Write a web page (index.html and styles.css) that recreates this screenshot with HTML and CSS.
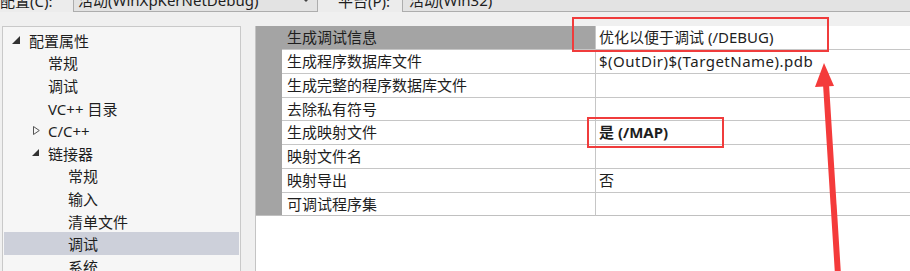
FILE: index.html
```html
<!DOCTYPE html>
<html lang="zh-CN">
<head>
    <meta charset="UTF-8">
    <meta name="viewport" content="width=device-width, initial-scale=1.0">
    <title>属性页 - 链接器 - 调试</title>
    <link rel="stylesheet" href="styles.css">
</head>
<body>
    <div class="topbar">
        <span class="bar-label">配置(C):</span>
        <div class="combo combo-config">
            <span>活动(WinXpKerNetDebug)</span>
            <span class="combo-caret"></span>
        </div>
        <span class="bar-label bar-label-platform">平台(P):</span>
        <div class="combo combo-platform">
            <span>活动(Win32)</span>
        </div>
    </div>

    <div class="main">
        <ul class="tree">
            <li class="node level-0"><span class="twisty twisty-open"></span>配置属性</li>
            <li class="node level-1"><span class="twisty"></span>常规</li>
            <li class="node level-1"><span class="twisty"></span>调试</li>
            <li class="node level-1"><span class="twisty"></span>VC++ 目录</li>
            <li class="node level-1">
                <span class="twisty">
                    <svg width="7" height="9" viewBox="0 0 7 9"><polygon points="0.5,0.5 6.3,4.5 0.5,8.5" fill="none" stroke="#555" stroke-width="1"/></svg>
                </span>C/C++
            </li>
            <li class="node level-1"><span class="twisty twisty-open"></span>链接器</li>
            <li class="node level-2"><span class="twisty"></span>常规</li>
            <li class="node level-2"><span class="twisty"></span>输入</li>
            <li class="node level-2"><span class="twisty"></span>清单文件</li>
            <li class="node level-2 node-selected"><span class="twisty"></span>调试</li>
            <li class="node level-2"><span class="twisty"></span>系统</li>
        </ul>

        <div class="grid">
            <div class="prop prop-selected">
                <span class="gutter"></span>
                <span class="prop-name">生成调试信息</span>
                <span class="prop-value">优化以便于调试 (/DEBUG)</span>
            </div>
            <div class="prop">
                <span class="gutter"></span>
                <span class="prop-name">生成程序数据库文件</span>
                <span class="prop-value prop-value-path">$(OutDir)$(TargetName).pdb</span>
            </div>
            <div class="prop">
                <span class="gutter"></span>
                <span class="prop-name">生成完整的程序数据库文件</span>
                <span class="prop-value"></span>
            </div>
            <div class="prop">
                <span class="gutter"></span>
                <span class="prop-name">去除私有符号</span>
                <span class="prop-value"></span>
            </div>
            <div class="prop">
                <span class="gutter"></span>
                <span class="prop-name">生成映射文件</span>
                <span class="prop-value prop-value-set">是 (/MAP)</span>
            </div>
            <div class="prop">
                <span class="gutter"></span>
                <span class="prop-name">映射文件名</span>
                <span class="prop-value"></span>
            </div>
            <div class="prop">
                <span class="gutter"></span>
                <span class="prop-name">映射导出</span>
                <span class="prop-value">否</span>
            </div>
            <div class="prop">
                <span class="gutter"></span>
                <span class="prop-name">可调试程序集</span>
                <span class="prop-value"></span>
            </div>
        </div>
    </div>

    <!-- 标注 -->
    <div class="callout callout-debug"></div>
    <div class="callout callout-map"></div>
    <svg class="arrow" width="910" height="271" viewBox="0 0 910 271">
        <polygon points="824,63 815,87 834,86" fill="#f43b3b"/>
        <polygon points="823,84 829,84 841,275 835,275" fill="#f43b3b"/>
    </svg>
</body>
</html>
```

FILE: styles.css
```css
body {
    margin: 0;
    background-color: #f0f0f0;
    color: #1e1e1e;
    font-family: 'Noto Sans', 'Noto Sans CJK SC', sans-serif;
    font-size: 15px;
    width: 910px;
    height: 271px;
    overflow: hidden;
    position: relative;
}
.topbar {
    height: 12px;
    display: flex;
    align-items: flex-end;
    overflow: hidden;
    background: #ececec;
}
.bar-label {
    width: 73px;
    line-height: 22px;
    white-space: nowrap;
    flex-shrink: 0;
}
.bar-label-platform {
    width: 64px;
    margin-left: 20px;
}
.combo {
    box-sizing: border-box;
    height: 24px;
    line-height: 21px;
    background: #e3e3e3;
    border: 1px solid #adadad;
    padding-left: 4px;
    display: flex;
    justify-content: space-between;
    align-items: center;
    white-space: nowrap;
    flex-shrink: 0;
}
.combo-config {
    width: 245px;
}
.combo-platform {
    width: 520px;
    padding-left: 6px;
}
.combo-caret {
    width: 0;
    height: 0;
    border-left: 4px solid transparent;
    border-right: 4px solid transparent;
    border-top: 4px solid #444;
    margin-right: 7px;
}
.main {
    display: flex;
    margin-top: 14px;
}
.tree {
    box-sizing: border-box;
    width: 239px;
    height: 260px;
    margin: 0 0 0 2px;
    padding: 2px 1px 0 0;
    list-style: none;
    background: #f6f6f6;
    border: 1px solid #c9c9c9;
    flex-shrink: 0;
}
.node {
    display: flex;
    align-items: center;
    height: 22.6px;
    white-space: nowrap;
}
.level-0 {
    padding-left: 7px;
}
.level-1 {
    padding-left: 26px;
}
.level-2 {
    padding-left: 46px;
}
.node-selected {
    background: #cdd0da;
    margin-left: 1px;
}
.node-selected.level-2 {
    padding-left: 45px;
}
.twisty {
    width: 19px;
    height: 100%;
    display: flex;
    align-items: center;
    flex-shrink: 0;
}
.twisty svg {
    margin-left: 4px;
}
.twisty-open::before {
    content: "";
    width: 0;
    height: 0;
    border-left: 8px solid transparent;
    border-bottom: 8px solid #333;
    margin-left: 2px;
    margin-top: -1px;
}
.level-1 .twisty-open::before {
    border-left-width: 7px;
    border-bottom-width: 7px;
    margin-left: 3px;
}
.grid {
    flex: 1;
    margin-left: 14px;
    height: 250px;
    background: white;
    border-left: 1px solid #c4c4c4;
}
.prop {
    display: grid;
    grid-template-columns: 26px 313px 1fr;
    height: 23.75px;
}
.prop:first-child {
    height: 24px;
}
.prop > span {
    box-sizing: border-box;
    border-bottom: 1px solid #c6c6c6;
    line-height: 22px;
    white-space: nowrap;
}
.gutter {
    background: #a4a4a4;
}
.prop .gutter {
    border-bottom: none;
}
.prop:last-child > span {
    border-bottom: 1px solid #c0c0c0;
}
.prop-name {
    padding-left: 5px;
}
.prop-selected .prop-name {
    background: #a4a4a4;
}
.prop-value {
    border-left: 1px solid #c6c6c6;
    padding-left: 3px;
}
.prop-value-path {
    letter-spacing: 0.5px;
}
.prop-value-set {
    font-weight: bold;
}
.callout {
    position: absolute;
    box-sizing: border-box;
    border: 2px solid #f03c3c;
}
.callout-debug {
    left: 572px;
    top: 17px;
    width: 257px;
    height: 35px;
}
.callout-map {
    left: 587px;
    top: 117px;
    width: 137px;
    height: 31px;
}
.arrow {
    position: absolute;
    left: 0;
    top: 0;
    pointer-events: none;
}
```
